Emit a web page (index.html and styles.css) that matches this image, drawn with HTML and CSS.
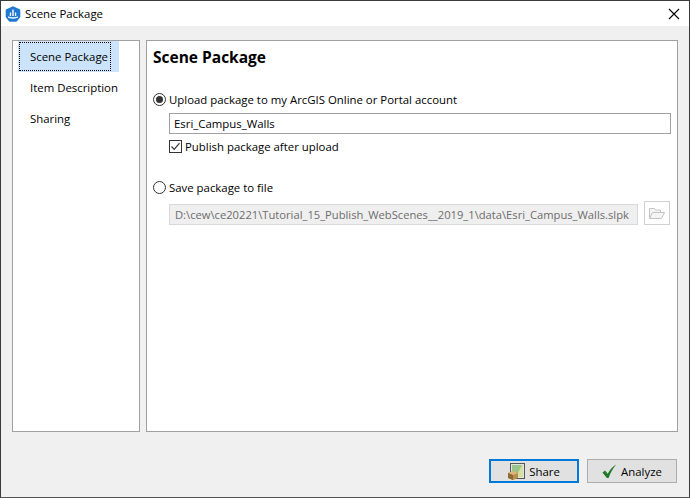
FILE: index.html
```html
<!DOCTYPE html>
<html lang="en">
<head>
  <meta charset="UTF-8" />
  <title>Scene Package</title>
  <link rel="stylesheet" href="styles.css">
</head>
<body>
  <div class="window">
    <div class="titlebar">
      <svg class="app-icon" width="16" height="16" viewBox="0 0 16 16">
        <path d="M8 .3 14.600 3.200Q15.300 3.500 15.300 4.300V10.500Q15.300 11 15 11.400L12 15.300Q11.700 15.700 11.200 15.700H4.800Q4.300 15.700 4 15.300L1 11.400Q.7 11 .7 10.500V4.300Q.7 3.500 1.400 3.200Z" fill="#1f78d1"/>
        <path d="M7.300 3.500h1.400v6.500h-1.400zM4.800 6.500h1.300v3.500H4.800zM9.900 6.500h1.300v3.500H9.900z" fill="#fff"/>
        <path d="M3 10.200c2 1.500 8 1.500 10 0v1.300c-2 1.500-8 1.500-10 0z" fill="#fff"/>
      </svg>
      <span class="title">Scene Package</span>
      <svg class="close" width="12" height="12" viewBox="0 0 12 12">
        <path d="M1 1 11 11M11 1 1 11" stroke="#000" stroke-width="1.100" fill="none"/>
      </svg>
    </div>

    <div class="content">
      <div class="panes">
        <ul class="nav">
          <li class="nav-item active"><span class="focus">Scene Package</span></li>
          <li class="nav-item">Item Description</li>
          <li class="nav-item">Sharing</li>
        </ul>

        <div class="page">
          <h1>Scene Package</h1>

          <label class="radio-row upload">
            <span class="radio checked"></span>
            Upload package to my ArcGIS Online or Portal account
          </label>
          <div class="indent">
            <div class="field">Esri_Campus_Walls</div>
            <label class="check-row">
              <svg class="check" width="13" height="13" viewBox="0 0 13 13">
                <rect x=".5" y=".5" width="12" height="12" fill="#fff" stroke="#333"/>
                <path d="M2.500 6.500 5.200 9.300 10.500 3.200" stroke="#333" stroke-width="1.200" fill="none"/>
              </svg>
              Publish package after upload
            </label>
          </div>

          <label class="radio-row save">
            <span class="radio"></span>
            Save package to file
          </label>
          <div class="indent path-row">
            <div class="field disabled">D:\cew\ce20221\Tutorial_15_Publish_WebScenes__2019_1\data\Esri_Campus_Walls.slpk</div>
            <div class="browse">
              <svg width="16" height="13" viewBox="0 0 16 13">
                <path d="M.5 11.500V1.500h5l1 1.500h5v2M.5 11.500 3.500 5.500H15.500L12.500 11.500Z" stroke="#c4c4c4" fill="#f4f4f4"/>
              </svg>
            </div>
          </div>
        </div>
      </div>

      <div class="buttons">
        <button class="btn default">
          <svg width="17" height="17" viewBox="0 0 17 17">
            <rect x="2.500" y=".5" width="14" height="15" fill="#dfe6e6" stroke="#555"/>
            <rect x="4" y="2" width="11" height="12" fill="#9bc48a"/>
            <path d="M8 14 14 2h1v12z" fill="#d8e0a0"/>
            <path d="M0 10 5 8 10 10V15L5 17 0 15z" fill="#b98d4c"/>
            <path d="M0 10 5 12 10 10 5 8z" fill="#dcb87c"/>
            <path d="M5 12V17L0 15V10z" fill="#8f6a33"/>
          </svg>
          Share
        </button>
        <button class="btn">
          <svg width="15" height="15" viewBox="0 0 17 17">
            <path d="M.5 9.500 3.500 7.500 6.500 11C8.500 7 11.500 3.500 16 .5 12.500 5 9.500 10 7.500 16H5.500Z" fill="#1f7a2c"/>
          </svg>
          Analyze
        </button>
      </div>
    </div>
  </div>
</body>
</html>
```

FILE: styles.css
```css
* {
  box-sizing: border-box;
}
body {
  margin: 0;
  font-family: "Open Sans", "Noto Sans", sans-serif;
  font-size: 11.4px;
  color: #000;
}
.window {
  width: 690px;
  height: 498px;
  display: flex;
  flex-direction: column;
  background: #f0f0f0;
  border: 1px solid #3a3a3a;
  border-bottom-color: #555;
}
.titlebar {
  height: 25px;
  background: #fff;
  display: flex;
  align-items: center;
  padding: 0 9px 0 4px;
}
.app-icon {
  margin-right: 4px;
}
.title {
  flex: 1;
}
.content {
  flex: 1;
  display: flex;
  flex-direction: column;
  padding: 14px 11px 14px 11px;
}
.panes {
  display: flex;
  gap: 6px;
  height: 392px;
}
.nav {
  flex: none;
  width: 128px;
  margin: 0;
  padding: 0 20px 0 5px;
  list-style: none;
  background: #fff;
  border: 1px solid #a0a0a0;
}
.nav-item {
  height: 31px;
  line-height: 31px;
  padding-left: 12px;
  white-space: nowrap;
}
.nav-item.active {
  padding: 1px 8px 1px 1px;
  background: #cce4fb;
}
.focus {
  display: block;
  height: 29px;
  line-height: 27px;
  padding-left: 10px;
  border: 1px dotted #000;
}
.page {
  flex: 1;
  min-width: 0;
  background: #fff;
  border: 1px solid #a0a0a0;
  padding: 6px;
}
h1 {
  margin: 0;
  font-size: 15.5px;
  font-weight: 700;
  line-height: 20px;
}
.radio-row {
  display: flex;
  align-items: center;
  gap: 3px;
  height: 18px;
}
.upload {
  margin-top: 23px;
}
.save {
  margin-top: 23px;
}
.radio {
  flex: none;
  width: 13px;
  height: 13px;
  border: 1px solid #333;
  border-radius: 50%;
  background: #fff;
  display: flex;
  align-items: center;
  justify-content: center;
}
.radio.checked::after {
  content: "";
  width: 7px;
  height: 7px;
  border-radius: 50%;
  background: #333;
}
.indent {
  margin-left: 16px;
}
.field {
  height: 21px;
  line-height: 19px;
  padding-left: 4px;
  margin-top: 5px;
  background: #fff;
  border: 1px solid #a0a0a0;
  white-space: nowrap;
  overflow: hidden;
}
.check-row {
  display: flex;
  align-items: center;
  gap: 3px;
  height: 18px;
  margin-top: 3px;
}
.path-row {
  display: flex;
  gap: 6px;
  margin-top: 3px;
  margin-right: 1px;
}
.field.disabled {
  flex: 1;
  min-width: 0;
  height: 21px;
  line-height: 19px;
  padding-left: 5px;
  font-size: 11.2px;
  background: #efefef;
  border-color: #d9d9d9;
  color: #6d6d6d;
}
.browse {
  flex: none;
  width: 26px;
  height: 24px;
  margin-top: 2px;
  display: flex;
  align-items: center;
  justify-content: center;
  border: 1px solid #d0d0d0;
  background: #fff;
}
.buttons {
  margin-top: auto;
  margin-right: 1px;
  display: flex;
  justify-content: flex-end;
  gap: 8px;
}
.btn {
  width: 90px;
  height: 24px;
  display: flex;
  align-items: center;
  justify-content: center;
  gap: 4px;
  padding: 0;
  font: inherit;
  background: #e1e1e1;
  border: 1px solid #adadad;
}
.btn.default {
  border: 2px solid #0078d7;
}
```
